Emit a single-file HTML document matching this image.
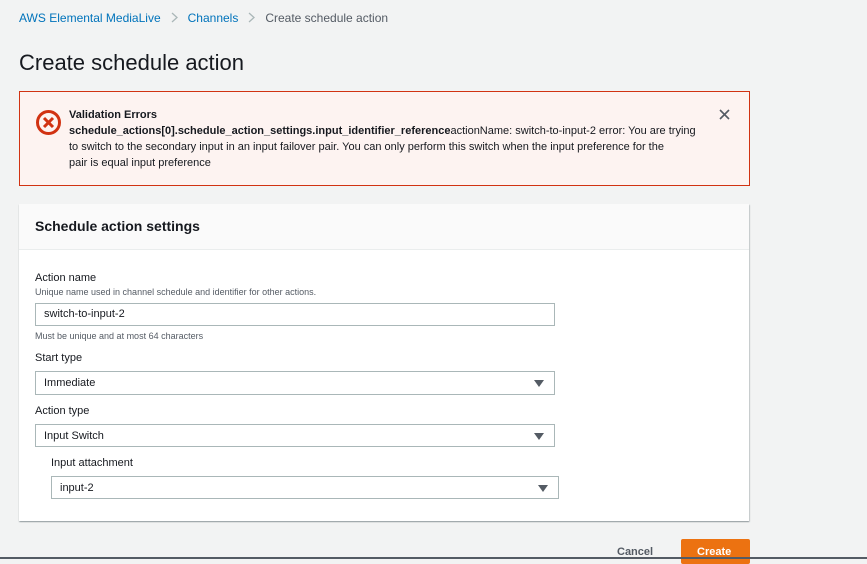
<!DOCTYPE html><html><head><style>
body{margin:0;width:867px;height:559px;background:#f2f3f3;font-family:"Liberation Sans",sans-serif;position:relative;overflow:hidden;color:#16191f}
.a{position:absolute;white-space:nowrap}
.bc{font-size:12px;top:11px;left:19px;color:#545b64}
.bc span.l{color:#0073bb}
.bc svg{margin:0 10px -1px 10px}
.err{position:absolute;left:19px;top:91px;width:729px;height:93px;border:1px solid #d13212;background:#fdf3f1}
.card{position:absolute;left:19px;top:204px;width:730px;height:317px;background:#fff;box-shadow:0 1px 1px rgba(0,28,36,.3),1px 1px 1px rgba(0,28,36,.15)}
.hd{height:45px;background:#fafafa;border-bottom:1px solid #eaeded}
.lab{font-size:11px;color:#16191f}
.desc{font-size:9px;color:#545b64}
.box{position:absolute;border:1px solid #aab7b8;background:#fff;font-size:11px;padding-left:8px;box-sizing:border-box}
.tri{position:absolute;right:10px;top:8px;width:0;height:0;border-left:5px solid transparent;border-right:5px solid transparent;border-top:7px solid #545b64}
</style></head><body>
<div class="a bc"><span class="l">AWS Elemental MediaLive</span><svg width="7" height="11" viewBox="0 0 7 11"><path d="M1 1L6 5.5L1 10" fill="none" stroke="#aab7b8" stroke-width="1.3"/></svg><span class="l">Channels</span><svg width="7" height="11" viewBox="0 0 7 11"><path d="M1 1L6 5.5L1 10" fill="none" stroke="#aab7b8" stroke-width="1.3"/></svg>Create schedule action</div>
<div class="a" style="left:19px;top:50px;font-size:22px">Create schedule action</div>
<div class="err"></div>
<svg class="a" style="left:35px;top:109px" width="27" height="27" viewBox="0 0 27 27"><circle cx="13.5" cy="13.5" r="11" fill="none" stroke="#d13212" stroke-width="3"/><path d="M9 9L18 18M18 9L9 18" stroke="#d13212" stroke-width="3"/></svg>
<div class="a" style="left:69px;top:107px;font-size:11px;line-height:16px">
<b>Validation Errors</b><br><b>schedule_actions[0].schedule_action_settings.input_identifier_reference</b>actionName: switch-to-input-2 error: You are trying<br>to switch to the secondary input in an input failover pair. You can only perform this switch when the input preference for the<br>pair is equal input preference</div>
<svg class="a" style="left:719px;top:109px" width="11" height="11" viewBox="0 0 11 11"><path d="M1 1L10 10M10 1L1 10" stroke="#545b64" stroke-width="1.6"/></svg>
<div class="card"><div class="hd"></div></div>
<div class="a" style="left:35px;top:218px;font-size:14px;font-weight:bold">Schedule action settings</div>
<div class="a lab" style="left:35px;top:272px">Action name</div>
<div class="a desc" style="left:35px;top:287px">Unique name used in channel schedule and identifier for other actions.</div>
<div class="box" style="left:35px;top:303px;width:520px;height:23px;line-height:21px">switch-to-input-2</div>
<div class="a desc" style="left:35px;top:331px">Must be unique and at most 64 characters</div>
<div class="a lab" style="left:35px;top:352px">Start type</div>
<div class="box" style="left:35px;top:371px;width:520px;height:24px;line-height:23px">Immediate<div class="tri"></div></div>
<div class="a lab" style="left:35px;top:405px">Action type</div>
<div class="box" style="left:35px;top:424px;width:520px;height:23px;line-height:22px">Input Switch<div class="tri"></div></div>
<div class="a lab" style="left:51px;top:457px">Input attachment</div>
<div class="box" style="left:51px;top:476px;width:508px;height:23px;line-height:22px">input-2<div class="tri"></div></div>
<div class="a" style="left:617px;top:546px;font-size:11px;font-weight:bold;color:#545b64">Cancel</div>
<div class="a" style="left:681px;top:539px;width:69px;height:25px;background:#ec7211;border-radius:2px"></div>
<div class="a" style="left:697px;top:546px;font-size:11px;font-weight:bold;color:#fff">Create</div>
<div class="a" style="left:0;top:557px;width:867px;height:2px;background:#545b64"></div>
</body></html>
